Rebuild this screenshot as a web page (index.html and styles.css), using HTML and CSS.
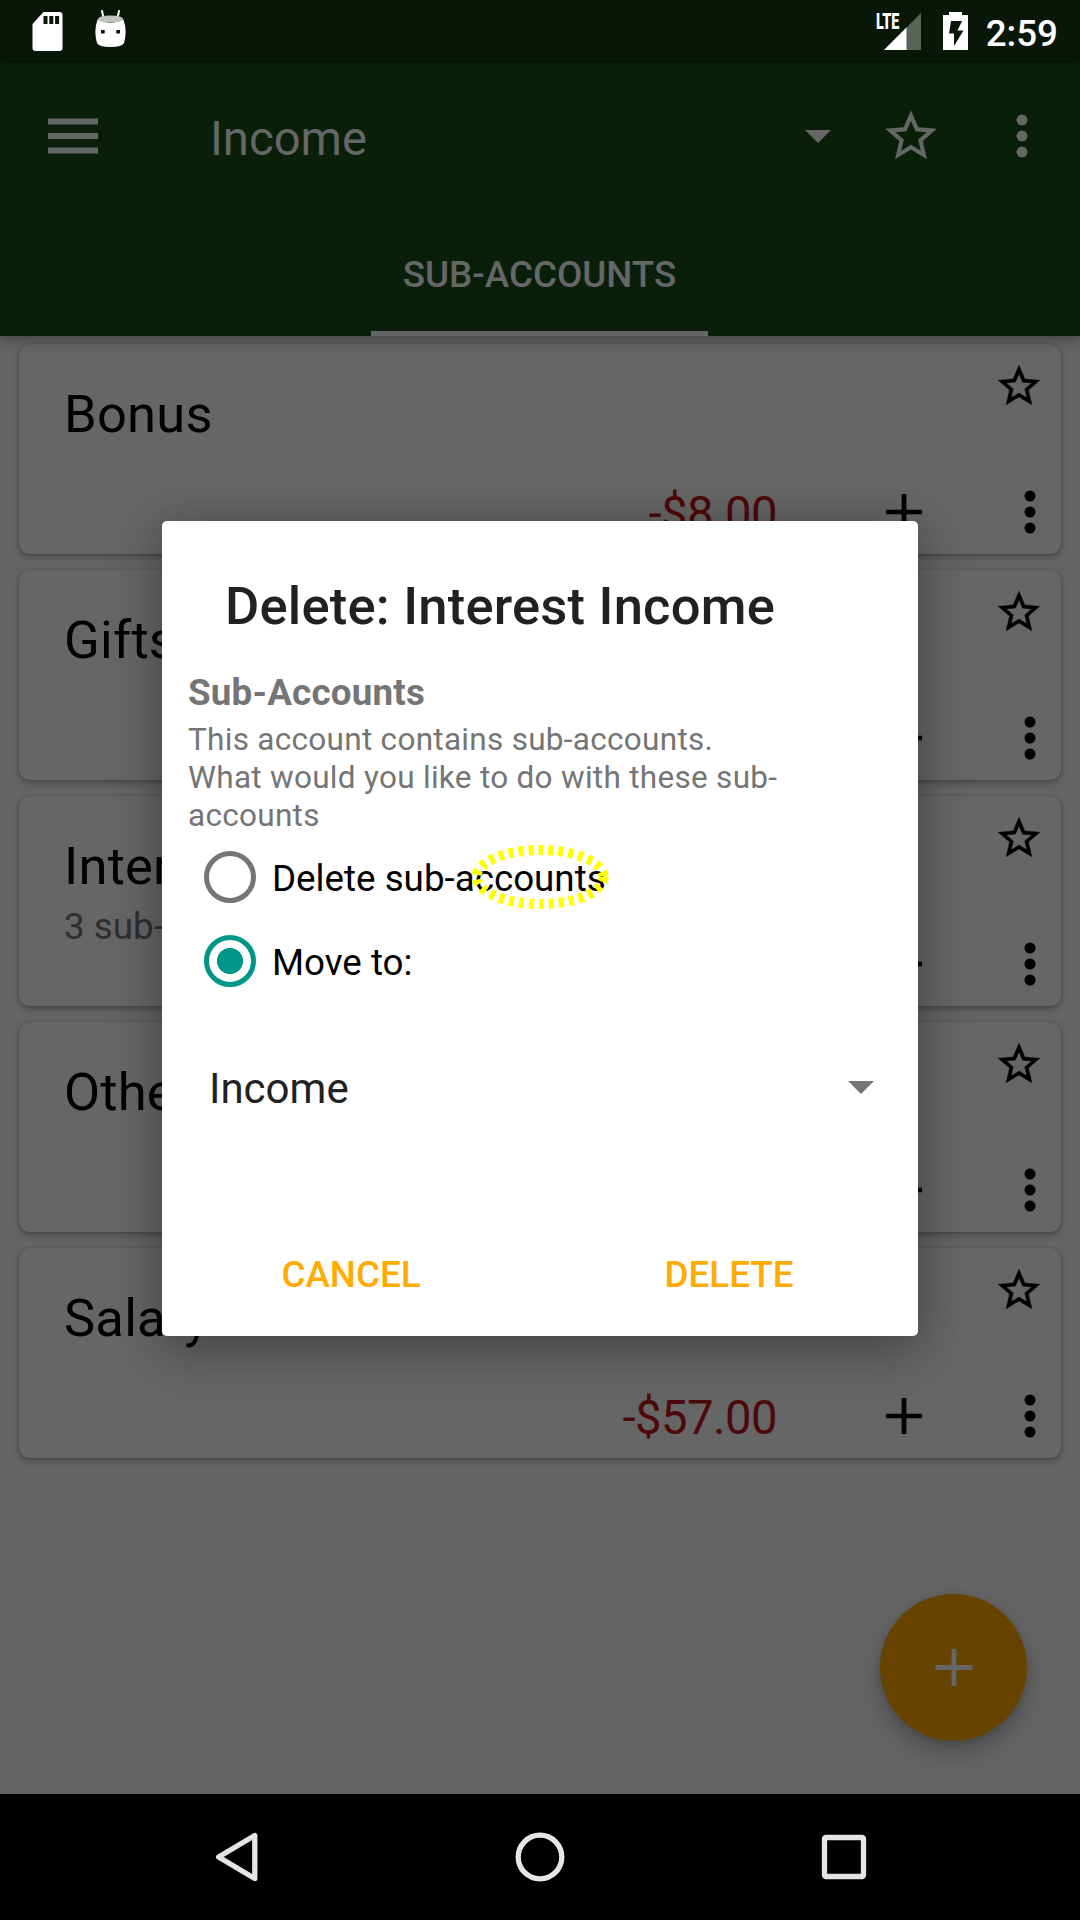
FILE: index.html
```html
<!DOCTYPE html>
<html lang="en">
<head>
<meta charset="utf-8">
<title>Income</title>
<link rel="stylesheet" href="styles.css">
</head>
<body>
<svg class="defs" width="0" height="0">
  <symbol id="star" viewBox="0 0 24 24"><path d="M22 9.24l-7.19-.62L12 2 9.19 8.63 2 9.24l5.46 4.73L5.82 21 12 17.27 18.18 21l-1.63-7.03L22 9.24zM12 15.4l-3.76 2.27 1-4.28-3.32-2.88 4.38-.38L12 6.1l1.71 4.04 4.38.38-3.32 2.88 1 4.28L12 15.4z"/></symbol>
  <symbol id="dots" viewBox="0 0 12 44"><circle cx="6" cy="6" r="5.5"/><circle cx="6" cy="22" r="5.5"/><circle cx="6" cy="38" r="5.5"/></symbol>
  <symbol id="plus" viewBox="0 0 38 38"><path d="M16.5 0h5v16.500h16.500v5h-16.500v16.500h-5v-16.500H0v-5h16.500z"/></symbol>
  <symbol id="caret" viewBox="0 0 26 13"><path d="M0 0h26L13 13z"/></symbol>
</svg>
<div class="screen">
  <div class="status">
    <div class="status-group">
      <svg class="sd" viewBox="0 0 30 39"><path fill-rule="evenodd" d="M11 0H27a3 3 0 0 1 3 3V36a3 3 0 0 1-3 3H3a3 3 0 0 1-3-3V12zM11 4v8h4V4zM16.800 4v8h4V4zM22.600 4v8h4V4z"/></svg>
      <svg class="droid" viewBox="0 0 31 37"><path d="M7 1l1.500 7M24 1l-1.500 7" stroke="#fff" stroke-width="2" stroke-linecap="round"/><path fill-rule="evenodd" d="M2.500 9.500Q15.500 16 28.500 9.500Q32.500 21 29 33Q27 37 15.500 37Q4 37 2 33Q-1.500 21 2.500 9.500zM6 20v3.500h3.700V20zM21.300 20v3.500H25V20z"/><ellipse class="lid" cx="15.500" cy="9" rx="12.500" ry="3.600"/></svg>
    </div>
    <div class="status-group">
      <div class="signal"><span class="lte">LTE</span><svg viewBox="0 0 37 37"><path d="M37 0V37H0z" opacity=".33"/><path d="M22.500 14.500V37H0z"/></svg></div>
      <svg class="battery" viewBox="0 0 25 38"><path fill-rule="evenodd" d="M6 0H19V3H25V38H0V3H6zM8 9L6 21.500H11V34L20.500 18.500H14.500L19 9z"/></svg>
      <span class="clock">2:59</span>
    </div>
  </div>
  <header class="appbar">
    <div class="toolbar">
      <svg class="menu" viewBox="0 0 50 36"><path d="M0 .5h50v6H0zM0 15h50v6H0zM0 29.500h50v6H0z"/></svg>
      <h1 class="title">Income</h1>
      <svg class="caret"><use href="#caret"/></svg>
      <svg class="bar-star"><use href="#star"/></svg>
      <svg class="dots"><use href="#dots"/></svg>
    </div>
    <div class="tabs"><div class="tab">SUB-ACCOUNTS</div></div>
  </header>
  <main class="list">
    <article class="card">
      <div class="info"><h2 class="name">Bonus</h2><p class="subs"></p></div><svg class="star"><use href="#star"/></svg>
      <div class="foot"><span class="amount">-$8.00</span><svg class="plus"><use href="#plus"/></svg><svg class="dots"><use href="#dots"/></svg></div>
    </article>
    <article class="card">
      <div class="info"><h2 class="name">Gifts</h2><p class="subs"></p></div><svg class="star"><use href="#star"/></svg>
      <div class="foot"><span class="amount"></span><svg class="plus"><use href="#plus"/></svg><svg class="dots"><use href="#dots"/></svg></div>
    </article>
    <article class="card">
      <div class="info"><h2 class="name">Interest</h2><p class="subs">3 sub-accounts</p></div><svg class="star"><use href="#star"/></svg>
      <div class="foot"><span class="amount"></span><svg class="plus"><use href="#plus"/></svg><svg class="dots"><use href="#dots"/></svg></div>
    </article>
    <article class="card">
      <div class="info"><h2 class="name">Other</h2><p class="subs"></p></div><svg class="star"><use href="#star"/></svg>
      <div class="foot"><span class="amount"></span><svg class="plus"><use href="#plus"/></svg><svg class="dots"><use href="#dots"/></svg></div>
    </article>
    <article class="card">
      <div class="info"><h2 class="name">Salary</h2><p class="subs"></p></div><svg class="star"><use href="#star"/></svg>
      <div class="foot"><span class="amount">-$57.00</span><svg class="plus"><use href="#plus"/></svg><svg class="dots"><use href="#dots"/></svg></div>
    </article>
  </main>
  <nav class="navbar">
    <svg viewBox="0 0 50 50"><path d="M43.800 3.500V46.500L7.600 25z"/></svg>
    <svg viewBox="0 0 50 50"><circle cx="25" cy="25" r="21.800"/></svg>
    <svg viewBox="0 0 50 50"><rect x="5.500" y="5.500" width="39" height="39" rx="1.500"/></svg>
  </nav>
  <div class="fab"><svg class="fab-plus"><use href="#plus"/></svg></div>
  <section class="dialog">
    <h2 class="dialog-title">Delete: Interest Income</h2>
    <div class="dialog-body">
      <h3 class="section">Sub-Accounts</h3>
      <p class="message">This account contains sub-accounts.<br>What would you like to do with these sub-<br>accounts</p>
      <div class="option"><span class="radio"></span><span class="label">Delete sub-accounts</span></div>
      <div class="option"><span class="radio checked"></span><span class="label">Move to:</span></div>
      <div class="spinner"><span class="value">Income</span><svg class="caret"><use href="#caret"/></svg></div>
    </div>
    <div class="actions"><span>CANCEL</span><span>DELETE</span></div>
    <svg class="marker" viewBox="0 0 140 66"><ellipse cx="70" cy="33" rx="63.500" ry="27"/></svg>
  </section>
</div>
</body>
</html>
```
FILE: styles.css
```css
* { box-sizing: border-box; margin: 0; padding: 0; }
body { width: 1080px; height: 1920px; overflow: hidden; font-family: Roboto, sans-serif; }
h1, h2, h3 { font-weight: 400; }
svg { display: block; flex: none; }
.defs { position: absolute; }
.screen { position: relative; width: 1080px; height: 1920px; display: flex; flex-direction: column; background: #646464; overflow: hidden; }

.status { height: 63px; flex: none; background: #081708; color: #fff; fill: #fff; display: flex; justify-content: space-between; padding: 0 22px 0 32px; z-index: 1; }
.status-group { display: flex; align-items: flex-start; }
.sd { width: 31px; height: 39px; margin-top: 12px; }
.droid { width: 31px; height: 37px; margin: 10px 0 0 32px; }
.lid { fill: #bfc4bf; }
.signal { width: 46px; height: 40px; margin-top: 11px; display: grid; }
.signal > * { grid-area: 1 / 1; }
.signal svg { width: 37px; height: 37px; margin: 2px 0 0 8px; }
.lte { font: 900 22px/24px Roboto, sans-serif; transform: scaleX(.65); transform-origin: 0 0; margin-top: -1px; }
.battery { width: 25px; height: 38px; margin: 12px 0 0 21px; }
.clock { font-size: 36.75px; font-weight: 500; line-height: 68px; margin-left: 18px; }

.appbar { height: 273px; flex: none; background: #0a1f0a; color: #666; fill: #666; box-shadow: 0 4px 12px rgba(0,0,0,.3); z-index: 1; }
.toolbar { height: 147px; display: flex; align-items: center; padding: 0 52px 2px 48px; }
.menu { width: 50px; height: 36px; }
.title { font-size: 47.25px; line-height: 56px; margin: 6px auto 0 112px; }
.caret { width: 26px; height: 13px; margin-top: 1px; }
.bar-star { width: 62px; height: 62px; margin: 0 74px 0 49px; }
.dots { width: 12px; height: 44px; }
.tabs { height: 126px; display: flex; justify-content: center; padding-right: 1px; }
.tab { width: 337px; border-bottom: 5px solid #666; font-size: 36.75px; font-weight: 500; line-height: 130px; text-align: center; white-space: nowrap; }

.list { flex: 1; padding: 8px 19px 0; display: flex; flex-direction: column; gap: 16px; }
.card { height: 210px; flex: none; border-radius: 11px; background: #666; box-shadow: 0 3px 6px rgba(0,0,0,.28), 0 0 2px rgba(0,0,0,.2); display: grid; grid-template: 126px 84px / 1fr auto; }
.info { padding-left: 45px; }
.name { font-size: 52.5px; line-height: 62px; letter-spacing: .2px; padding-top: 39px; color: #000; }
.subs { font-size: 36.75px; line-height: 43px; padding-top: 8px; color: #2f2f2f; }
.card .star { width: 50px; height: 50px; margin: 17px 17px 0 0; stroke: #000; stroke-width: .2; }
.foot { grid-column: 1 / 3; display: flex; align-items: center; padding: 0 25px 0 0; }
.amount { flex: 1; text-align: right; font-size: 47.25px; line-height: 56px; letter-spacing: -.55px; color: #4d0a0a; padding: 4px 109px 0 0; }
.plus { width: 36px; height: 38px; margin-right: 102px; }

.navbar { height: 126px; flex: none; background: #000; display: flex; justify-content: center; align-items: center; gap: 254px; }
.navbar svg { width: 50px; height: 50px; fill: none; stroke: #e5e5e5; stroke-width: 5.3; stroke-linejoin: round; }

.fab { position: absolute; left: 880px; top: 1594px; width: 147px; height: 147px; border-radius: 50%; background: #664400; display: grid; place-items: center; box-shadow: 0 12px 22px rgba(0,0,0,.22), 0 2px 8px rgba(0,0,0,.1); }
.fab-plus { width: 38px; height: 37px; fill: #666; }

.dialog { position: absolute; left: 162px; top: 521px; width: 756px; height: 815px; border-radius: 5px; background: #fff; box-shadow: 0 20px 56px rgba(0,0,0,.2), 0 2px 44px rgba(0,0,0,.2); display: flex; flex-direction: column; }
.dialog-title { font-size: 52.5px; font-weight: 500; line-height: 62px; letter-spacing: .22px; padding: 54px 0 0 63px; color: #212121; }
.dialog-body { padding: 34px 44px 0 26px; flex: 1; color: #757575; }
.section { font-size: 36.75px; font-weight: 700; line-height: 43px; letter-spacing: .2px; }
.message { font-size: 31.5px; line-height: 38px; letter-spacing: .29px; padding-top: 7px; white-space: nowrap; }
.option { height: 84px; display: flex; align-items: center; padding-left: 16px; gap: 16px; color: #000; font-size: 36.75px; }
.label { padding-top: 3px; }
.radio { width: 52px; height: 52px; border: 5px solid #757575; border-radius: 50%; }
.checked { border-color: #009688; background: radial-gradient(circle, #009688 12.700px, transparent 13.300px); }
.spinner { display: flex; justify-content: space-between; align-items: center; height: 84px; margin-top: 42px; padding-left: 21px; font-size: 42px; color: #212121; fill: #757575; }
.value { padding-top: 3px; }
.actions { display: grid; grid-template-columns: 1fr 1fr; height: 126px; line-height: 129px; text-align: center; font-size: 36.75px; font-weight: 500; color: #ffab00; }
.marker { position: absolute; left: 308px; top: 323px; width: 140px; height: 66px; fill: none; stroke: #ff0; stroke-width: 10; stroke-dasharray: 5 5; }
```
